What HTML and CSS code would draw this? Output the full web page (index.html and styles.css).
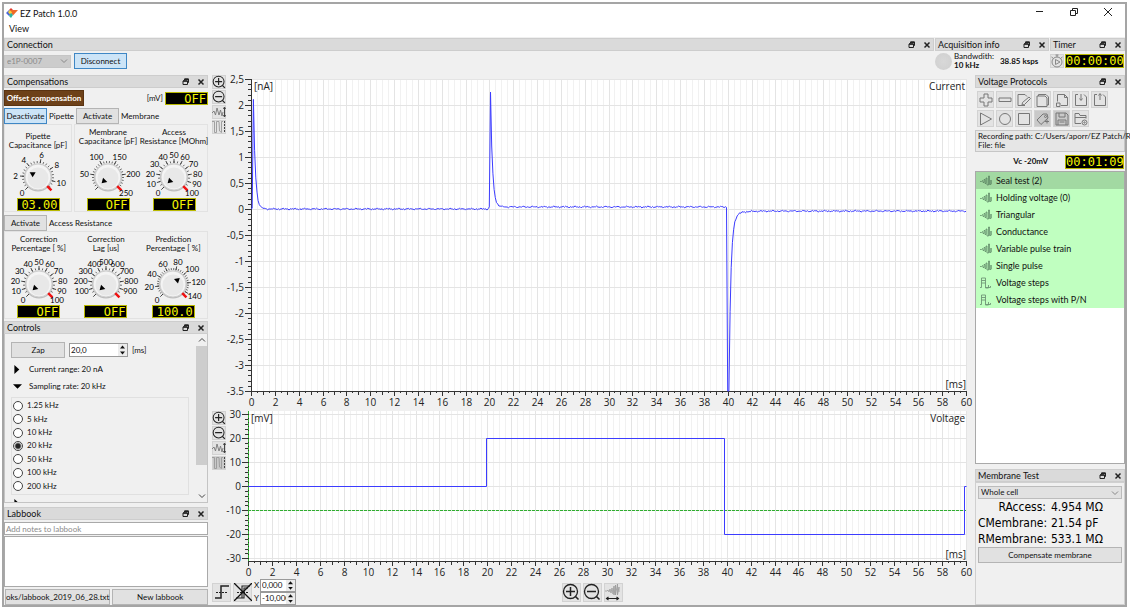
FILE: index.html
```html
<!DOCTYPE html>
<html lang="en">
<head>
    <meta charset="UTF-8">
    <meta name="viewport" content="width=device-width, initial-scale=1.0">
    <title>EZ Patch 1.0.0</title>
    <link rel="stylesheet" href="styles.css">
</head>
<body>
    <!-- Icon set -->
    <svg class="defs" aria-hidden="true">
        <symbol id="float" viewBox="0 0 8 8"><path d="M2.5 2.5V1h4v3.5H5.5M1 3h4.5v3.5H1z" fill="none" stroke="#222"/><path d="M1 3h4.5M2.5 1.2h4" stroke="#222" stroke-width="1.4"/></symbol>
        <symbol id="close" viewBox="0 0 8 8"><path d="M1.5 1.5l5 5M6.5 1.5l-5 5" stroke="#222" stroke-width="1.5"/></symbol>
        <symbol id="zoom-in" viewBox="0 0 18 18"><circle cx="8.5" cy="8.5" r="7" fill="none" stroke="#222" stroke-width="1.3"/><path d="M4 8.5h9M8.5 4v9M13.5 13.5l3 3" stroke="#222" stroke-width="1.5"/></symbol>
        <symbol id="zoom-out" viewBox="0 0 18 18"><circle cx="8.5" cy="8.5" r="7" fill="none" stroke="#222" stroke-width="1.3"/><path d="M4 8.5h9M13.5 13.5l3 3" stroke="#222" stroke-width="1.5"/></symbol>
        <symbol id="fit-y" viewBox="0 0 14 14"><path d="M0 8l2-2 1.5 4L5 3l2 7 1.5-5L10 11l1-4" fill="none" stroke="#777" stroke-width=".9"/><path d="M12.5 3v8M11.5 4l1-2 1 2M11.5 10l1 2 1-2" fill="none" stroke="#333" stroke-width=".9"/></symbol>
        <symbol id="fit-steps" viewBox="0 0 14 14"><path d="M0 1.500h2.500v11h2v-11h2.500l.5 9.500 2 1.500v-11h1.500" fill="none" stroke="#999" stroke-width=".9"/><path d="M12.500 1v12" stroke="#444" stroke-dasharray="2 1"/></symbol>
        <symbol id="fit-x" viewBox="0 0 18 18"><path d="M1 8h2l1-1 1 2 1-3 1 4 1-5 1 6 1-8v9l1.500-10v10l2-11v11l1.500-8v5" fill="none" stroke="#999" stroke-width=".8"/><path d="M3 15.500h11M4.500 14L2.500 15.500l2 1.500M12.500 14l2 1.500-2 1.500" fill="none" stroke="#222" stroke-width="1.100"/></symbol>
        <symbol id="wave" viewBox="0 0 12 12"><path d="M0 6.500h1.500l1-1 .5 2h1V4.500h1v4h1V3h1v7h1.500V1h1v8.500H11V5v4" fill="none" stroke="#4d7356" stroke-width=".8" opacity=".8"/></symbol>
        <symbol id="steps" viewBox="0 0 12 12"><path d="M0 10.500h1.500V1h4v10h3V8M1.500 3.500h4M1.500 6h4M5.500 10.500h5V9" fill="none" stroke="#6f9576" stroke-width=".9"/></symbol>
    </svg>

    <div class="window">
        <header class="titlebar">
            <svg class="logo" viewBox="0 0 12 10"><path d="M0 5l3-3 3 3-3 3z" fill="#4a66d8"/><path d="M3 2l2-2 3 3-2 2z" fill="#e33a2c"/><path d="M5 2h7L7 7.500 5 5z" fill="#ef6a28"/><path d="M2 4l2-2 2 2.500-2 2z" fill="#f6d334"/><path d="M3 8l2-3 2 2-2 3z" fill="#2bb5a2"/></svg>
            <h1>EZ Patch 1.0.0</h1>
            <div class="window-buttons">
                <button aria-label="Minimize"><svg viewBox="0 0 10 10"><path d="M1 4.500h7" stroke="#222"/></svg></button>
                <button aria-label="Restore"><svg viewBox="0 0 10 10"><path d="M1.500 3.500h5v5h-5zM3.500 3.500v-2h5v5h-2" fill="none" stroke="#222"/></svg></button>
                <button aria-label="Close"><svg viewBox="0 0 10 10"><path d="M1 1l8 8M9 1L1 9" stroke="#222"/></svg></button>
            </div>
        </header>
        <nav class="menubar"><button>View</button></nav>

        <div class="top-docks">
            <section class="dock connection">
                <div class="dock-title"><h2>Connection</h2></div>
                <div class="dock-row">
                    <select class="combo device" aria-label="Device" disabled><option>e1P-0007</option></select>
                    <button class="btn active disconnect">Disconnect</button>
                </div>
            </section>
            <section class="dock acquisition">
                <div class="dock-title"><h2>Acquisition info</h2></div>
                <div class="dock-row">
                    <span class="led"></span>
                    <p>Bandwdith:<br><b>10 kHz</b></p>
                    <b class="rate">38.85 ksps</b>
                </div>
            </section>
            <section class="dock timer">
                <div class="dock-title"><h2>Timer</h2></div>
                <div class="dock-row">
                    <button class="icon-btn" aria-label="Start timer"><svg viewBox="0 0 14 14"><circle cx="7" cy="8" r="5" fill="none" stroke="#888"/><path d="M5.500 5.500v5L10 8zM5.500 1h3M7 1v2M1.500 3l2 1.500M12.500 3l-2 1.500" fill="none" stroke="#888"/></svg></button>
                    <output class="lcd clock">00:00:00</output>
                </div>
            </section>
        </div>

        <main>
            <aside class="left-column">
                <section class="dock">
                    <div class="dock-title"><h2>Compensations</h2></div>
                    <div class="comp-row offset">
                        <button class="btn brown">Offset compensation</button>
                        <span class="unit">[mV]</span>
                        <output class="lcd">OFF</output>
                    </div>
                    <div class="comp-row">
                        <button class="btn active toggle">Deactivate</button>
                        <span>Pipette</span>
                        <button class="btn toggle">Activate</button>
                        <span>Membrane</span>
                    </div>
                    <div class="dials">
                        <div class="dial-box low">
                            <div class="dial-cell"><h3>Pipette<br>Capacitance [pF]</h3><svg class="dial" data-max="11.25" data-step="2" data-first="0" data-minor="0.5" data-value="3"></svg><output class="lcd">03.00</output></div>
                        </div>
                        <div class="dial-box pair">
                            <div class="dial-cell"><h3>Membrane<br>Capacitance [pF]</h3><svg class="dial" data-max="250" data-step="50" data-first="50" data-minor="10" data-value="0"></svg><output class="lcd">OFF</output></div>
                            <div class="dial-cell"><h3>Access<br>Resistance [MOhm]</h3><svg class="dial" data-max="100" data-step="10" data-first="0" data-minor="5" data-value="0"></svg><output class="lcd">OFF</output></div>
                        </div>
                    </div>
                    <div class="comp-row access">
                        <button class="btn toggle">Activate</button>
                        <span>Access Resistance</span>
                    </div>
                    <div class="dials">
                        <div class="dial-box triple">
                            <div class="dial-cell"><h3>Correction<br>Percentage [ %]</h3><svg class="dial" data-max="100" data-step="10" data-first="0" data-minor="5" data-value="0"></svg><output class="lcd">OFF</output></div>
                            <div class="dial-cell"><h3>Correction<br>Lag [us]</h3><svg class="dial" data-max="1000" data-step="100" data-first="100" data-last="900" data-minor="50" data-value="0"></svg><output class="lcd">OFF</output></div>
                            <div class="dial-cell"><h3>Prediction<br>Percentage [ %]</h3><svg class="dial" data-max="147" data-step="20" data-first="0" data-minor="5" data-value="100"></svg><output class="lcd">100.0</output></div>
                        </div>
                    </div>
                </section>

                <section class="dock controls">
                    <div class="dock-title"><h2>Controls</h2></div>
                    <div class="scroll-panel">
                        <div class="controls-body">
                            <div class="zap-row">
                                <button class="btn zap">Zap</button>
                                <span class="spin"><input type="text" value="20,0" id="zap-time"><span class="arrows"><button aria-label="Increase"></button><button aria-label="Decrease"></button></span></span>
                                <label for="zap-time">[ms]</label>
                            </div>
                            <button class="fold"><i class="tri closed"></i>Current range: 20 nA</button>
                            <button class="fold"><i class="tri open"></i>Sampling rate: 20 kHz</button>
                            <div class="rates">
                                <label><input type="radio" name="rate">1.25 kHz</label>
                                <label><input type="radio" name="rate">5 kHz</label>
                                <label><input type="radio" name="rate">10 kHz</label>
                                <label><input type="radio" name="rate" checked>20 kHz</label>
                                <label><input type="radio" name="rate">50 kHz</label>
                                <label><input type="radio" name="rate">100 kHz</label>
                                <label><input type="radio" name="rate">200 kHz</label>
                            </div>
                            <button class="fold" aria-label="More"><i class="tri closed"></i></button>
                        </div>
                        <div class="scrollbar">
                            <svg viewBox="0 0 8 8"><path d="M1 5.500l3-3 3 3" fill="none" stroke="#444"/></svg>
                            <div class="thumb"></div>
                            <svg class="down" viewBox="0 0 8 8"><path d="M1 2.500l3 3 3-3" fill="none" stroke="#444"/></svg>
                        </div>
                    </div>
                </section>

                <section class="dock labbook">
                    <div class="dock-title"><h2>Labbook</h2></div>
                    <input type="text" class="note" placeholder="Add notes to labbook" aria-label="Note">
                    <textarea class="notes" aria-label="Labbook"></textarea>
                    <div class="book-buttons">
                        <button class="btn">oks/labbook_2019_06_28.txt</button>
                        <button class="btn">New labbook</button>
                    </div>
                </section>
            </aside>

            <section class="center">
                <div class="plot-row current">
                    <div class="plot-tools">
                        <button class="icon-btn" aria-label="Zoom in"><svg><use href="#zoom-in"/></svg></button>
                        <button class="icon-btn" aria-label="Zoom out"><svg><use href="#zoom-out"/></svg></button>
                        <button class="icon-btn" aria-label="Autoscale"><svg><use href="#fit-y"/></svg></button>
                        <button class="icon-btn" aria-label="Overlay"><svg><use href="#fit-steps"/></svg></button>
                    </div>
                    <div class="plot-holder"><svg class="plot" id="current-plot"></svg></div>
                </div>
                <div class="plot-row voltage">
                    <div class="plot-tools">
                        <button class="icon-btn" aria-label="Zoom in"><svg><use href="#zoom-in"/></svg></button>
                        <button class="icon-btn" aria-label="Zoom out"><svg><use href="#zoom-out"/></svg></button>
                        <button class="icon-btn" aria-label="Autoscale"><svg><use href="#fit-y"/></svg></button>
                        <button class="icon-btn pressed" aria-label="Overlay"><svg><use href="#fit-steps"/></svg></button>
                    </div>
                    <div class="plot-holder"><svg class="plot" id="voltage-plot"></svg></div>
                </div>
                <div class="bottom-tools">
                    <div class="cursor-tools">
                        <button class="icon-btn big" aria-label="Step cursor"><svg viewBox="0 0 18 18"><path d="M2 15h6V3h8" fill="none" stroke="#222" stroke-width="1.500"/><path d="M3 9.500h12" stroke="#222" stroke-dasharray="2 1"/></svg></button>
                        <button class="icon-btn big" aria-label="Clear cursor"><svg viewBox="0 0 18 18"><path d="M2 15h6V3h8M6 15h4V5h4" fill="none" stroke="#222" stroke-width="1.100"/><path d="M3 9.500h12" stroke="#222" stroke-dasharray="2 1"/><path d="M0 0l18 18M18 0L0 18" stroke="#111" stroke-width="1.300"/></svg></button>
                        <div class="coords">
                            <div><label for="pos-x">X</label><span class="spin"><input type="text" id="pos-x" value="0,000"><span class="arrows"><button aria-label="Increase X"></button><button aria-label="Decrease X"></button></span></span></div>
                            <div><label for="pos-y">Y</label><span class="spin"><input type="text" id="pos-y" value="-10,000"><span class="arrows"><button aria-label="Increase Y"></button><button aria-label="Decrease Y"></button></span></span></div>
                        </div>
                    </div>
                    <div class="time-tools">
                        <button class="icon-btn big" aria-label="Zoom in time"><svg><use href="#zoom-in"/></svg></button>
                        <button class="icon-btn big" aria-label="Zoom out time"><svg><use href="#zoom-out"/></svg></button>
                        <button class="icon-btn big" aria-label="Fit time"><svg><use href="#fit-x"/></svg></button>
                    </div>
                </div>
            </section>

            <aside class="right-column">
                <section class="dock protocols">
                    <div class="dock-title"><h2>Voltage Protocols</h2></div>
                    <div class="protocol-tools">
                        <button class="icon-btn" aria-label="Add"><svg viewBox="0 0 14 14"><path d="M5 1h4v4h4v4H9v4H5V9H1V5h4z"/></svg></button>
                        <button class="icon-btn" aria-label="Remove"><svg viewBox="0 0 14 14"><path d="M1 5h12v3.500H1z"/></svg></button>
                        <button class="icon-btn" aria-label="Edit"><svg viewBox="0 0 14 14"><path d="M8 12.500H1v-11h7l2 2M12 4l1.500 1.500-6 6L5 12l.5-2.500L12 4"/></svg></button>
                        <button class="icon-btn" aria-label="Duplicate"><svg viewBox="0 0 14 14"><path d="M1 3h8l2 2v8.500H1zM2.500 3V1.500h7.500l2.500 2.500v8H11"/></svg></button>
                        <button class="icon-btn" aria-label="Save as"><svg viewBox="0 0 14 14"><path d="M2.500 8.500v-7h7l3 3v8H6M1.500 10h3.500v3.500H1.500zM9.500 1.500v3h3"/></svg></button>
                        <button class="icon-btn" aria-label="Import"><svg viewBox="0 0 14 14"><path d="M4 1.500H1.500v11h11V4L10 1.500M7 1v6"/><path d="M5.500 5.500l1.500 2 1.500-2"/></svg></button>
                        <button class="icon-btn" aria-label="Export"><svg viewBox="0 0 14 14"><path d="M4 1.500H1.500v11h11V4L10 1.500M7 7V1"/><path d="M5.500 2.500l1.500-2 1.500 2"/></svg></button>
                        <button class="icon-btn" aria-label="Play"><svg viewBox="0 0 14 14"><path d="M1.500 1l11 6-11 6z"/></svg></button>
                        <button class="icon-btn" aria-label="Record"><svg viewBox="0 0 14 14"><circle cx="7" cy="7" r="5.500"/></svg></button>
                        <button class="icon-btn" aria-label="Stop"><svg viewBox="0 0 14 14"><path d="M1.500 1.500h11v11h-11z"/></svg></button>
                        <button class="icon-btn pressed" aria-label="Tag"><svg viewBox="0 0 14 14"><path d="M1 8l6-6h4l1 4-7 6.500zM9 9.500h4M11 7.500v4"/><circle cx="9.500" cy="4.500" r="1"/></svg></button>
                        <button class="icon-btn pressed" aria-label="Save"><svg viewBox="0 0 14 14"><path d="M1 1h10l2 2v10H1zM4 1v4h6V1M3 13V8h8v5M4.500 10h5"/></svg></button>
                        <button class="icon-btn" aria-label="Recording folder"><svg viewBox="0 0 14 14"><path d="M7 11.500H1V1.500h4l1 2h6v3M1 5.500h11"/><circle cx="10.500" cy="10.500" r="2.500"/><circle cx="10.500" cy="10.500" r=".7"/></svg></button>
                    </div>
                    <div class="path-box">Recording path: C:/Users/aporr/EZ Patch/R<br>File: file</div>
                    <div class="vc-row"><b>Vc -20mV</b><output class="lcd clock">00:01:09</output></div>
                    <ul class="protocol-list">
                        <li class="selected"><svg><use href="#wave"/></svg>Seal test (2)</li>
                        <li><svg><use href="#wave"/></svg>Holding voltage (0)</li>
                        <li><svg><use href="#wave"/></svg>Triangular</li>
                        <li><svg><use href="#wave"/></svg>Conductance</li>
                        <li><svg><use href="#wave"/></svg>Variable pulse train</li>
                        <li><svg><use href="#wave"/></svg>Single pulse</li>
                        <li><svg><use href="#steps"/></svg>Voltage steps</li>
                        <li><svg><use href="#steps"/></svg>Voltage steps with P/N</li>
                    </ul>
                </section>
                <section class="dock membrane">
                    <div class="dock-title"><h2>Membrane Test</h2></div>
                    <div class="membrane-body">
                        <select class="combo" aria-label="Test mode"><option>Whole cell</option></select>
                        <dl>
                            <dt>RAccess:</dt><dd>4.954 MΩ</dd>
                            <dt>CMembrane:</dt><dd>21.54 pF</dd>
                            <dt>RMembrane:</dt><dd>533.1 MΩ</dd>
                        </dl>
                        <button class="btn">Compensate membrane</button>
                    </div>
                </section>
            </aside>
        </main>
    </div>
    <script src="script.js"></script>
</body>
</html>
```

FILE: styles.css
```css
* {
    box-sizing: border-box;
}

body {
    margin: 0;
    padding: 2px 3px 3px 2px;
    background: #fff;
    color: #111;
    font-family: Lato, sans-serif;
    font-size: 8px;
    line-height: 9px;
}

h1, h2, h3, p, ul, dl, dd {
    margin: 0;
    padding: 0;
    font-weight: normal;
}

button, input, select, textarea {
    margin: 0;
    padding: 0;
    border: 0;
    border-radius: 0;
    background: none;
    color: inherit;
    font: inherit;
}

.defs {
    position: absolute;
    width: 0;
    height: 0;
}

.window {
    display: flex;
    flex-direction: column;
    min-height: calc(100vh - 5px);
    border: 2px solid #a5a5a5;
    background: #f0f0f0;
}

/* Title and menu */
.titlebar {
    display: flex;
    align-items: center;
    height: 18px;
    padding-left: 2px;
    background: #fff;
}

.logo {
    width: 12px;
    height: 10px;
}

h1, h2, .menubar, .protocol-list {
    font-size: 9px;
}

h1 {
    flex: 1;
    padding-left: 2px;
}

.window-buttons {
    display: flex;
}

.window-buttons button {
    width: 34px;
    height: 18px;
}

.window-buttons svg {
    width: 10px;
    height: 10px;
}

.menubar {
    height: 15px;
    padding-left: 5px;
    background: #fff;
    line-height: 14px;
}

/* Docks */
.dock-title {
    display: flex;
    align-items: center;
    height: 13px;
    padding: 0 2px;
    border: 1px solid #cdcdcd;
    background: #dadada;
}

h2 {
    flex: 1;
    line-height: 11px;
    white-space: nowrap;
}

.dock-button {
    display: flex;
    margin-left: 7px;
}

.dock-button svg {
    width: 8px;
    height: 8px;
}

.top-docks {
    display: flex;
    gap: 1px;
    height: 38px;
    padding-top: 1px;
}

.connection {
    flex: 1;
}

.acquisition {
    width: 114px;
}

.timer {
    width: 75px;
}

.dock-row {
    display: flex;
    align-items: center;
    height: 20px;
}

.connection .dock-row {
    gap: 3px;
}

.device {
    width: 67px;
}

.disconnect {
    width: 53px;
}

.combo {
    height: 13px;
    padding-left: 2px;
    border: 1px solid #bcbcbc;
    background: #e1e1e1;
    appearance: none;
}

.combo:disabled {
    border-color: #c6c6c6;
    background: #cccccc;
    color: #8a8a8a;
    opacity: 1;
}

.btn {
    height: 16px;
    border: 1px solid #b4b4b4;
    background: #e1e1e1;
    text-align: center;
    white-space: nowrap;
}

.btn.active {
    border-color: #3f87c5;
    background: #cce4f7;
}

.btn.brown {
    border-color: #5a3310;
    background: #6d4119;
    color: #fff;
    font-weight: bold;
}

.icon-btn {
    display: flex;
    align-items: center;
    justify-content: center;
    width: 14px;
    height: 14px;
    background: #e3e3e3;
    border: 1px solid #d2d2d2;
}

.icon-btn svg {
    width: 14px;
    height: 14px;
    flex: none;
}

.icon-btn.pressed {
    background: #c9c9c9;
}

.led {
    width: 17px;
    height: 17px;
    margin: 0 2px 0 0;
    border-radius: 50%;
    background: radial-gradient(circle, #d8d8d8, #cfcfcf);
}

.rate {
    margin-left: 6px;
}

.timer .dock-row {
    justify-content: space-between;
    padding-right: 1px;
}

.lcd {
    display: block;
    width: 43px;
    height: 13px;
    padding-right: 1px;
    border: 1px solid #b9b900;
    background: #000;
    color: #f4f400;
    font-family: "DejaVu Sans Mono", monospace;
    font-size: 12px;
    line-height: 12px;
    text-align: right;
}

.lcd.clock {
    width: 59px;
    height: 14px;
    padding: 0;
    text-align: center;
}

main {
    display: flex;
    flex: 1;
}

/* Left column */
.left-column {
    display: flex;
    flex-direction: column;
    gap: 2px;
    width: 204px;
}

.comp-row {
    display: flex;
    align-items: center;
    gap: 2px;
    height: 16px;
    margin-top: 2px;
}

.comp-row.access {
    margin-top: 3px;
}

.offset .brown {
    width: 80px;
}

.offset .unit {
    flex: 1;
    text-align: right;
}

.toggle {
    width: 43px;
}

.dials {
    display: flex;
    gap: 2px;
}

.dial-box {
    display: flex;
    flex: 1;
    height: 88px;
    border: 1px solid #e2e2e2;
}

.dial-box.pair {
    flex: 2;
}

.dial-cell {
    display: flex;
    flex-direction: column;
    flex: 1;
    align-items: center;
    width: 0;
}

h3 {
    padding-top: 3px;
    font-size: 8px;
    line-height: 9px;
    text-align: center;
    white-space: nowrap;
}

.low h3 {
    padding-top: 7px;
    margin-bottom: -4px;
}

.dial {
    width: 66px;
    height: 52px;
    overflow: visible;
}

.dial text {
    font-size: 8px;
    text-anchor: middle;
}

/* Controls */
.scroll-panel {
    display: flex;
    height: 169px;
    border: 1px solid #c4c4c4;
    border-top: 0;
    overflow: hidden;
}

.controls-body {
    flex: 1;
    padding: 8px 6px 0;
}

.zap-row {
    display: flex;
    align-items: center;
    gap: 4px;
    height: 16px;
    margin-bottom: 3px;
}

.zap {
    width: 54px;
}

.spin {
    display: flex;
    width: 59px;
    height: 14px;
    border: 1px solid #9a9a9a;
    background: #fff;
}

.spin input {
    flex: 1;
    width: 0;
    padding-left: 1px;
}

.arrows {
    display: flex;
    flex-direction: column;
    width: 9px;
    background: #ececec;
}

.arrows button {
    flex: 1;
    width: 5px;
    margin: 1px auto;
    background: #111;
    clip-path: polygon(50% 10%, 100% 90%, 0 90%);
}

.arrows button + button {
    clip-path: polygon(0 10%, 100% 10%, 50% 90%);
}

.fold {
    display: flex;
    align-items: center;
    width: 100%;
    height: 17px;
}

.tri {
    width: 9px;
    height: 9px;
    margin: 0 7px 0 2px;
    background: #000;
}

.tri.closed {
    clip-path: polygon(15% 0, 70% 50%, 15% 100%);
}

.tri.open {
    clip-path: polygon(0 25%, 100% 25%, 50% 75%);
}

.rates {
    display: flex;
    flex-direction: column;
    width: 178px;
    height: 98px;
    margin-top: 2px;
    padding: 1px;
    border: 1px solid #e0e0e0;
}

.rates label {
    display: flex;
    flex: 1;
    align-items: center;
    gap: 4px;
}

.rates input {
    width: 10px;
    height: 10px;
    border: 1px solid #444;
    border-radius: 50%;
    background: #fff;
    appearance: none;
}

.rates input:checked {
    background: radial-gradient(circle, #222 2px, #fff 4px);
}

.scrollbar {
    display: flex;
    flex-direction: column;
    align-items: center;
    width: 11px;
    padding: 2px 0;
}

.scrollbar svg {
    width: 8px;
    height: 8px;
}

.scrollbar .down {
    margin-top: auto;
}

.thumb {
    width: 11px;
    height: 119px;
    margin-top: 2px;
    background: #cdcdcd;
}

/* Labbook */
.labbook {
    display: flex;
    flex: 1;
    flex-direction: column;
    margin-top: 2px;
}

.note {
    height: 13px;
    margin: 2px 0 1px;
    padding-left: 1px;
    border: 1px solid #a9a9a9;
    background: #fff;
}

.note::placeholder {
    color: #8c8c8c;
    opacity: 1;
}

.notes {
    flex: 1;
    height: 0;
    border: 1px solid #a9a9a9;
    background: #fff;
    resize: none;
}

.book-buttons {
    display: grid;
    grid-template-columns: 1fr 1fr;
    gap: 2px;
    padding: 2px 0 0 1px;
}

/* Plots */
.center {
    display: flex;
    flex: 1;
    flex-direction: column;
    min-width: 0;
    padding-left: 4px;
}

.plot-row {
    display: flex;
    min-height: 0;
}

.plot-row.current {
    flex: 337;
}

.plot-row.voltage {
    flex: 168;
}

.plot-tools {
    display: flex;
    flex-direction: column;
    gap: 1px;
    width: 14px;
}

.plot-holder {
    position: relative;
    flex: 1;
}

.plot {
    position: absolute;
    width: 100%;
    height: 100%;
    overflow: visible;
}

.plot text {
    fill: #222;
    font-family: "Open Sans", sans-serif;
    font-size: 10px;
}

.plot .area {
    fill: #fff;
}

.plot .grid {
    stroke: #f1f1f1;
}

.plot .grid.major {
    stroke: #e4e4e4;
}

.plot .axis {
    fill: none;
    stroke: #333;
}

.plot .trace {
    fill: none;
    stroke: #3c3cff;
}

.plot .marker {
    stroke: #2fae2f;
    stroke-dasharray: 3 1;
}

.bottom-tools {
    display: flex;
    height: 26px;
}

.cursor-tools, .time-tools {
    display: flex;
    align-items: center;
    gap: 2px;
}

.cursor-tools {
    flex: 349;
}

.time-tools {
    flex: 412;
}

.icon-btn.big {
    width: 19px;
    height: 19px;
}

.icon-btn.big svg {
    width: 18px;
    height: 18px;
}

.coords > div {
    display: flex;
    align-items: center;
    gap: 1px;
}

.coords label {
    width: 5px;
}

.coords .spin {
    width: 36px;
    height: 13px;
}

/* Right column */
.right-column {
    display: flex;
    flex-direction: column;
    gap: 5px;
    width: 150px;
}

.protocols {
    display: flex;
    flex: 1;
    flex-direction: column;
}

.protocol-tools {
    display: grid;
    grid-template-columns: repeat(7, 17px);
    gap: 2px;
    padding: 3px 2px;
}

.protocol-tools .icon-btn {
    width: 17px;
    height: 17px;
}

.protocol-tools svg {
    fill: none;
    stroke: #777;
}

.path-box {
    height: 22px;
    padding: 1px 2px;
    border: 1px solid #c6c6c6;
    background: #e6e6e6;
    white-space: nowrap;
}

.vc-row {
    display: flex;
    align-items: center;
    justify-content: flex-end;
    gap: 17px;
    height: 19px;
    padding-right: 1px;
}

.protocol-list {
    flex: 1;
    border: 1px solid #a9a9a9;
    background: #fff;
    list-style: none;
}

.protocol-list li {
    display: flex;
    align-items: center;
    gap: 4px;
    height: 17px;
    padding-left: 4px;
    background: #c0ffc0;
}

.protocol-list .selected {
    background: #a2d9a2;
}

.protocol-list svg {
    width: 12px;
    height: 12px;
}

.membrane-body {
    display: flex;
    flex-direction: column;
    height: 123px;
    padding: 3px 2px;
    border: 1px solid #d0d0d0;
}

.membrane-body .combo {
    width: 100%;
}

dl {
    display: grid;
    grid-template-columns: 68px 1fr;
    column-gap: 5px;
    color: #000;
    font-family: "DejaVu Sans Condensed", "DejaVu Sans", sans-serif;
    font-size: 12px;
    line-height: 16px;
}

dt {
    text-align: right;
}
```

FILE: script.js
```js
const NS = 'http://www.w3.org/2000/svg';

function add(parent, name, attrs, text) {
    const el = document.createElementNS(NS, name);
    for (const key in attrs) el.setAttribute(key, attrs[key]);
    if (text !== undefined) el.textContent = text;
    parent.appendChild(el);
    return el;
}

// Float and close buttons of every dock
document.querySelectorAll('.dock-title').forEach(bar => {
    ['float', 'close'].forEach(icon => {
        const button = document.createElement('button');
        button.className = 'dock-button';
        button.setAttribute('aria-label', icon);
        button.innerHTML = `<svg><use href="#${icon}"/></svg>`;
        bar.appendChild(button);
    });
});

// Arrow of the drop-downs
document.querySelectorAll('.combo').forEach(combo => {
    combo.style.backgroundImage = 'url("data:image/svg+xml,' + encodeURIComponent('<svg xmlns="http://www.w3.org/2000/svg" width="8" height="8"><path d="M1 2.5l3 3 3-3" fill="none" stroke="#888"/></svg>') + '")';
    combo.style.backgroundRepeat = 'no-repeat';
    combo.style.backgroundPosition = 'right 2px center';
});

// Dials: 270 degree sweep, red mark at the end
function drawDial(svg) {
    const d = svg.dataset;
    const max = +d.max;
    const cx = 33;
    const cy = 31;
    const at = (value, rx, ry) => {
        const a = (-135 + 270 * value / max) * Math.PI / 180;
        return [cx + rx * Math.sin(a), cy - ry * Math.cos(a)];
    };
    const tick = (value, r1, r2, stroke, width) => {
        const [x1, y1] = at(value, r1, r1);
        const [x2, y2] = at(value, r2, r2);
        add(svg, 'line', { x1, y1, x2, y2, stroke, 'stroke-width': width });
    };
    for (let v = 0; v < max; v += +d.minor) tick(v, 14, 16, '#444', 0.8);
    for (let v = 0; v < max; v += +d.step) tick(v, 14, 18, '#333', 0.9);
    add(svg, 'circle', { cx, cy: cy + 0.5, r: 14, fill: '#bdbdbd' });
    add(svg, 'circle', { cx, cy, r: 13, fill: '#f4f4f4', stroke: '#d0d0d0' });
    add(svg, 'circle', { cx, cy: cy + 1, r: 10.5, fill: '#e8e8e8' });
    tick(max, 13, 19, '#f01010', 2.5);
    const [px, py] = at(+d.value, 6, 6);
    const turn = d.value === '3' ? 180 : -135 + 270 * d.value / max;
    add(svg, 'path', { d: 'M0 -3L3 2H-3z', transform: `translate(${px} ${py}) rotate(${turn})`, fill: '#000' });
    const last = +(d.last || max);
    for (let v = +d.first; v <= last; v += +d.step) {
        const [x, y] = at(v, 21 + String(v).length * 1.5, 22);
        add(svg, 'text', { x, y: y + 3 }, v);
    }
}

document.querySelectorAll('.dial').forEach(drawDial);

function currentTrace() {
    const points = [];
    for (let i = 0; i <= 600; i++) {
        const t = i / 10;
        let y = 0.014 * Math.sin(t * 12.3) * Math.sin(t * 5.1 + 1) + 0.008 * Math.sin(t * 31);
        if (i < 200) y += i < 2 ? 0 : 2.1 * Math.exp(-(i - 2) / 1.6);
        else if (i < 400) y += 0.04 + (i < 201 ? 0 : 2.2 * Math.exp(-(i - 201) / 1.6));
        else y += -0.04 + (i < 402 ? -3.5 : -3.4 * Math.exp(-(i - 401) / 1.6)) - 0.15 * Math.exp(-(i - 401) / 6);
        points.push([t, Math.max(y, -3.5)]);
    }
    return points;
}

const plots = [
    {
        id: 'current-plot', left: 25, top: 4, bottom: 20, min: -3.5, max: 2.5, step: 0.5, minor: 0.1,
        unit: '[nA]', name: 'Current', trace: currentTrace(),
        label: v => v === -3.5 ? '-3.5' : String(v).replace('.', ',')
    },
    {
        id: 'voltage-plot', left: 22, top: 0, bottom: 18, min: -31.2, max: 31.4, step: 10, minor: 2,
        unit: '[mV]', name: 'Voltage', marker: -10, label: v => String(v),
        trace: [[0, 0], [19.9, 0], [19.9, 20], [39.8, 20], [39.8, -20], [59.8, -20], [59.8, 0], [60, 0]]
    }
];

function drawPlot(cfg) {
    const svg = document.getElementById(cfg.id);
    const w = svg.clientWidth;
    const h = svg.clientHeight;
    const x0 = cfg.left;
    const x1 = w - 9;
    const y0 = cfg.top;
    const y1 = h - cfg.bottom;
    const X = t => x0 + (x1 - x0) * t / 60;
    const Y = v => y0 + (y1 - y0) * (cfg.max - v) / (cfg.max - cfg.min);
    const snap = n => Math.round(n) + 0.5;
    svg.innerHTML = '';
    add(svg, 'rect', { class: 'area', x: x0, y: y0, width: x1 - x0, height: y1 - y0 });

    let axis = `M${x0 + 0.5} ${y0}V${y1 + 0.5}H${x1}`;
    for (let i = 0; i <= 120; i++) {
        const x = snap(X(i / 2));
        add(svg, 'line', { class: i % 4 ? 'grid' : 'grid major', x1: x, x2: x, y1: y0, y2: y1 });
        axis += `M${x} ${y1}v${i % 4 === 0 ? 5 : i % 2 === 0 ? 4 : 2}`;
        if (i % 4 === 0) add(svg, 'text', { x, y: y1 + 15, 'text-anchor': 'middle' }, i / 2);
    }
    const ratio = Math.round(cfg.step / cfg.minor);
    for (let i = Math.ceil(cfg.min / cfg.minor - 0.01); i <= cfg.max / cfg.minor + 0.01; i++) {
        const y = snap(Y(i * cfg.minor));
        const major = i % ratio === 0;
        axis += `M${x0} ${y}h${major ? -6 : -3}`;
        if (major) {
            add(svg, 'line', { class: 'grid major', x1: x0, x2: x1, y1: y, y2: y });
            add(svg, 'text', { x: x0 - 7, y: y + 3, 'text-anchor': 'end' }, cfg.label(i / ratio * cfg.step));
        }
    }
    add(svg, 'path', { class: 'axis', d: axis });
    if (cfg.marker) {
        const y = snap(Y(cfg.marker));
        add(svg, 'line', { class: 'marker', x1: x0, x2: x1, y1: y, y2: y });
        add(svg, 'line', { class: 'marker', x1: x0 + 0.5, x2: x0 + 0.5, y1: y0, y2: y1 });
    }
    const line = cfg.trace.map(([t, v]) => cfg.marker ? `${snap(X(t))} ${snap(Y(v))}` : `${X(t).toFixed(1)} ${Y(v).toFixed(1)}`);
    add(svg, 'path', { class: 'trace', d: 'M' + line.join('L') });
    add(svg, 'text', { x: x0 + 3, y: y0 + 11 }, cfg.unit);
    add(svg, 'text', { x: x1 - 1, y: y0 + 11, 'text-anchor': 'end' }, cfg.name);
    add(svg, 'text', { x: x1, y: y1 - 3, 'text-anchor': 'end' }, '[ms]');
}

function drawPlots() {
    plots.forEach(drawPlot);
}

drawPlots();
window.addEventListener('resize', drawPlots);
```
